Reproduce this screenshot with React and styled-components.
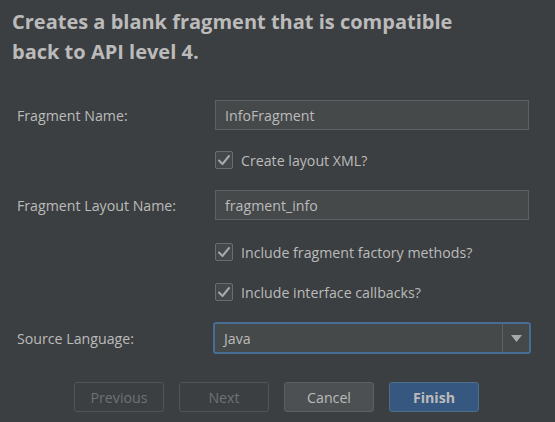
import React from "react";
import styled, { createGlobalStyle } from "styled-components";

const GlobalStyle = createGlobalStyle`
  html, body {
    margin: 0;
    padding: 0;
    background: #3c3f41;
  }
  body {
    font-family: "Open Sans", "Noto Sans", sans-serif;
    color: #bbbbbb;
  }
`;

const Dialog = styled.div`
  width: 555px;
  height: 422px;
  box-sizing: border-box;
  background: #3c3f41;
  padding: 7px 0 0 12px;
  display: flex;
  flex-direction: column;
`;

const Title = styled.h1`
  margin: 0;
  font-size: 20px;
  line-height: 30px;
  font-weight: 700;
  color: #bbbbbb;
  width: 460px;
`;

const Form = styled.div`
  display: flex;
  flex-direction: column;
  padding-left: 5px;
  margin-top: 33px;
`;

const Row = styled.div`
  display: grid;
  grid-template-columns: 198px 314px;
  align-items: center;
  height: ${({ h }) => h || 30}px;
  margin-top: ${({ top }) => top || 0}px;
`;

const Label = styled.span`
  font-size: 14.2px;
  color: #bbbbbb;
`;

const Field = styled.div`
  height: 30px;
  box-sizing: border-box;
  background: #45494a;
  border: 1px solid #5e6161;
  padding: 0 9px;
  display: flex;
  align-items: center;
  font-size: 14.2px;
  color: #bbbbbb;
`;

const Check = styled.label`
  grid-column: 2;
  display: flex;
  align-items: center;
  gap: 8px;
  font-size: 14.2px;
  color: #bbbbbb;
`;

const Box = styled.span`
  width: 18px;
  height: 18px;
  box-sizing: border-box;
  border: 1px solid #6b6b6b;
  border-radius: 2px;
  background: #43494a;
  display: flex;
  align-items: center;
  justify-content: center;
`;

const Select = styled.div`
  height: 32px;
  margin-left: -2px;
  margin-right: -2px;
  box-sizing: border-box;
  border: 2px solid #466d94;
  border-radius: 3px;
  background: #45494a;
  display: flex;
  align-items: stretch;
  font-size: 14.2px;
`;

const SelectValue = styled.div`
  flex: 1;
  display: flex;
  align-items: center;
  padding-left: 9px;
  color: #bbbbbb;
`;

const Arrow = styled.div`
  width: 26px;
  border-left: 1px solid #5e6161;
  display: flex;
  align-items: center;
  justify-content: center;
`;

const Buttons = styled.div`
  display: flex;
  gap: 15px;
  margin-top: 28px;
  padding-left: 62px;
`;

const Button = styled.button`
  width: 90px;
  height: 30px;
  box-sizing: border-box;
  border-radius: 3px;
  font-family: "Open Sans", "Noto Sans", sans-serif;
  font-size: 14.2px;
  font-weight: ${({ primary }) => (primary ? 700 : 400)};
  color: ${({ disabled }) => (disabled ? "#6f7273" : "#bbbbbb")};
  background: ${({ primary, disabled }) =>
    primary ? "#365880" : disabled ? "#3c3f41" : "#4c5052"};
  border: 1px solid
    ${({ primary, disabled }) =>
      primary ? "#4c708c" : disabled ? "#515556" : "#5e6060"};
  padding: 0;
`;

const Tick = () => (
  <svg width="14" height="12" viewBox="0 0 14 12">
    <path
      d="M2 6.5 L5.5 10 L12 2"
      fill="none"
      stroke="#a9a9a9"
      strokeWidth="2"
      strokeLinecap="round"
      strokeLinejoin="round"
    />
  </svg>
);

const CheckRow = ({ top, children }) => (
  <Row top={top}>
    <Check>
      <Box>
        <Tick />
      </Box>
      {children}
    </Check>
  </Row>
);

export default function App() {
  return (
    <>
      <GlobalStyle />
      <Dialog>
        <Title>Creates a blank fragment that is compatible back to API level 4.</Title>
        <Form>
          <Row>
            <Label>Fragment Name:</Label>
            <Field>InfoFragment</Field>
          </Row>
          <CheckRow top={15}>Create layout XML?</CheckRow>
          <Row top={15}>
            <Label>Fragment Layout Name:</Label>
            <Field>fragment_info</Field>
          </Row>
          <CheckRow top={17}>Include fragment factory methods?</CheckRow>
          <CheckRow top={10}>Include interface callbacks?</CheckRow>
          <Row top={15} h={32}>
            <Label>Source Language:</Label>
            <Select>
              <SelectValue>Java</SelectValue>
              <Arrow>
                <svg width="11" height="7" viewBox="0 0 11 7">
                  <path d="M0 0 H11 L5.5 7 Z" fill="#a9a9a9" />
                </svg>
              </Arrow>
            </Select>
          </Row>
        </Form>
        <Buttons>
          <Button disabled>Previous</Button>
          <Button disabled>Next</Button>
          <Button>Cancel</Button>
          <Button primary>Finish</Button>
        </Buttons>
      </Dialog>
    </>
  );
}
